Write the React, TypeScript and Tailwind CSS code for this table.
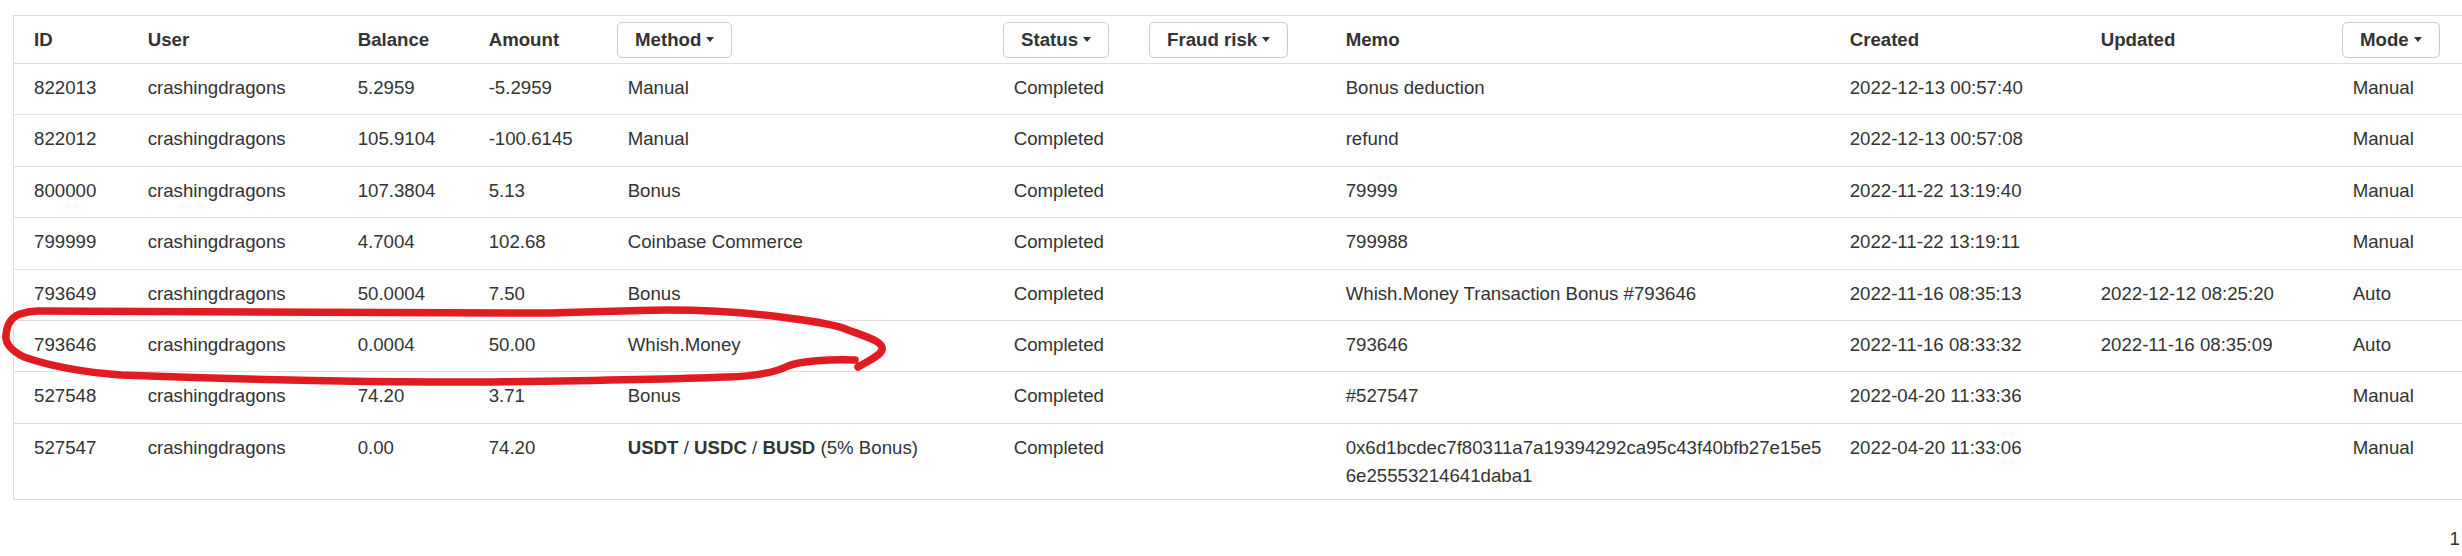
import React from 'react';

type Row = {
  id: string;
  user: string;
  balance: string;
  amount: string;
  method: React.ReactNode;
  status: string;
  memo: React.ReactNode;
  created: string;
  updated: string;
  mode: string;
};

const rows: Row[] = [
  { id: '822013', user: 'crashingdragons', balance: '5.2959', amount: '-5.2959', method: 'Manual', status: 'Completed', memo: 'Bonus deduction', created: '2022-12-13 00:57:40', updated: '', mode: 'Manual' },
  { id: '822012', user: 'crashingdragons', balance: '105.9104', amount: '-100.6145', method: 'Manual', status: 'Completed', memo: 'refund', created: '2022-12-13 00:57:08', updated: '', mode: 'Manual' },
  { id: '800000', user: 'crashingdragons', balance: '107.3804', amount: '5.13', method: 'Bonus', status: 'Completed', memo: '79999', created: '2022-11-22 13:19:40', updated: '', mode: 'Manual' },
  { id: '799999', user: 'crashingdragons', balance: '4.7004', amount: '102.68', method: 'Coinbase Commerce', status: 'Completed', memo: '799988', created: '2022-11-22 13:19:11', updated: '', mode: 'Manual' },
  { id: '793649', user: 'crashingdragons', balance: '50.0004', amount: '7.50', method: 'Bonus', status: 'Completed', memo: 'Whish.Money Transaction Bonus #793646', created: '2022-11-16 08:35:13', updated: '2022-12-12 08:25:20', mode: 'Auto' },
  { id: '793646', user: 'crashingdragons', balance: '0.0004', amount: '50.00', method: 'Whish.Money', status: 'Completed', memo: '793646', created: '2022-11-16 08:33:32', updated: '2022-11-16 08:35:09', mode: 'Auto' },
  { id: '527548', user: 'crashingdragons', balance: '74.20', amount: '3.71', method: 'Bonus', status: 'Completed', memo: '#527547', created: '2022-04-20 11:33:36', updated: '', mode: 'Manual' },
  {
    id: '527547',
    user: 'crashingdragons',
    balance: '0.00',
    amount: '74.20',
    method: (
      <>
        <b>USDT</b> / <b>USDC</b> / <b>BUSD</b> (5% Bonus)
      </>
    ),
    status: 'Completed',
    memo: (
      <>
        0x6d1bcdec7f80311a7a19394292ca95c43f40bfb27e15e5
        <br />
        6e25553214641daba1
      </>
    ),
    created: '2022-04-20 11:33:06',
    updated: '',
    mode: 'Manual',
  },
];

// column widths, measured off the screenshot
const cols = [123, 210, 131, 139, 386, 146, 186, 504, 251, 252, 120];

function Dropdown({ label }: { label: string }) {
  return (
    <button className="inline-flex h-[36px] items-center gap-[5px] rounded-[5px] border border-[#cccccc] bg-white px-[17px] font-bold text-[#333333]">
      {label}
      <span className="h-0 w-0 border-x-[4px] border-t-[5px] border-x-transparent border-t-[#333333]" />
    </button>
  );
}

function Annotation() {
  return (
    <svg
      className="pointer-events-none absolute left-0 top-0"
      width="2462"
      height="556"
      viewBox="0 0 2462 556"
      fill="none"
    >
      <path
        d="M 855 360 C 830 359, 800 361, 788 366 C 778 371, 760 376, 727 377 C 650 380, 560 381, 485 382 C 350 382, 200 378, 121 375 C 80 372, 50 366, 24 357 C 10 350, 5 342, 6 335 C 7 325, 10 318, 20 314 C 26 312, 32 311, 38 311 C 150 313, 350 313, 545 313 C 600 312, 640 310, 667 310 C 720 310, 760 314, 788 318 C 820 322, 840 326, 848 330 C 870 338, 884 342, 882 350 C 880 356, 868 361, 858 367"
        stroke="#e11b22"
        strokeWidth="7.5"
        strokeLinecap="round"
        strokeLinejoin="round"
      />
    </svg>
  );
}

export default function App() {
  const th = 'h-[48px] border-b border-[#dddddd] p-0 pl-[10.67px] text-left align-middle font-bold';
  const thBtn = 'h-[48px] border-b border-[#dddddd] p-0 text-left align-middle font-normal';

  return (
    <div
      className="relative min-h-[556px] w-[2462px] overflow-hidden bg-white pt-[15px] text-[18.67px] leading-[28px] text-[#333333]"
      style={{ fontFamily: '"Liberation Sans", Arial, sans-serif' }}
    >
      <div className="pl-[13px]">
        <table className="table-fixed border-separate border-spacing-0 border-l border-t border-[#dddddd]">
          <colgroup>
            {cols.map((w, i) => (
              <col key={i} style={{ width: w }} />
            ))}
          </colgroup>
          <thead>
            <tr>
              <th className={`${th} !pl-[20px]`}>ID</th>
              <th className={th}>User</th>
              <th className={th}>Balance</th>
              <th className={th}>Amount</th>
              <th className={thBtn}><Dropdown label="Method" /></th>
              <th className={thBtn}><Dropdown label="Status" /></th>
              <th className={thBtn}><Dropdown label="Fraud risk" /></th>
              <th className={th}>Memo</th>
              <th className={th}>Created</th>
              <th className={th}>Updated</th>
              <th className={thBtn}><Dropdown label="Mode" /></th>
            </tr>
          </thead>
          <tbody>
            {rows.map((r, i) => {
              const last = i === rows.length - 1;
              const td = `border-b border-[#dddddd] pl-[10.67px] pr-0 pt-[10px] align-top whitespace-nowrap ${last ? 'pb-[9px]' : 'pb-[12.4px]'}`;
              return (
                <tr key={r.id}>
                  <td className={`${td} !pl-[20px]`}>{r.id}</td>
                  <td className={td}>{r.user}</td>
                  <td className={td}>{r.balance}</td>
                  <td className={td}>{r.amount}</td>
                  <td className={td}>{r.method}</td>
                  <td className={td}>{r.status}</td>
                  <td className={td}></td>
                  <td className={td}>{r.memo}</td>
                  <td className={td}>{r.created}</td>
                  <td className={td}>{r.updated}</td>
                  <td className={td}>{r.mode}</td>
                </tr>
              );
            })}
          </tbody>
        </table>
      </div>

      <div className="mt-[25px] pr-[2px] text-right">1</div>

      <Annotation />
    </div>
  );
}
